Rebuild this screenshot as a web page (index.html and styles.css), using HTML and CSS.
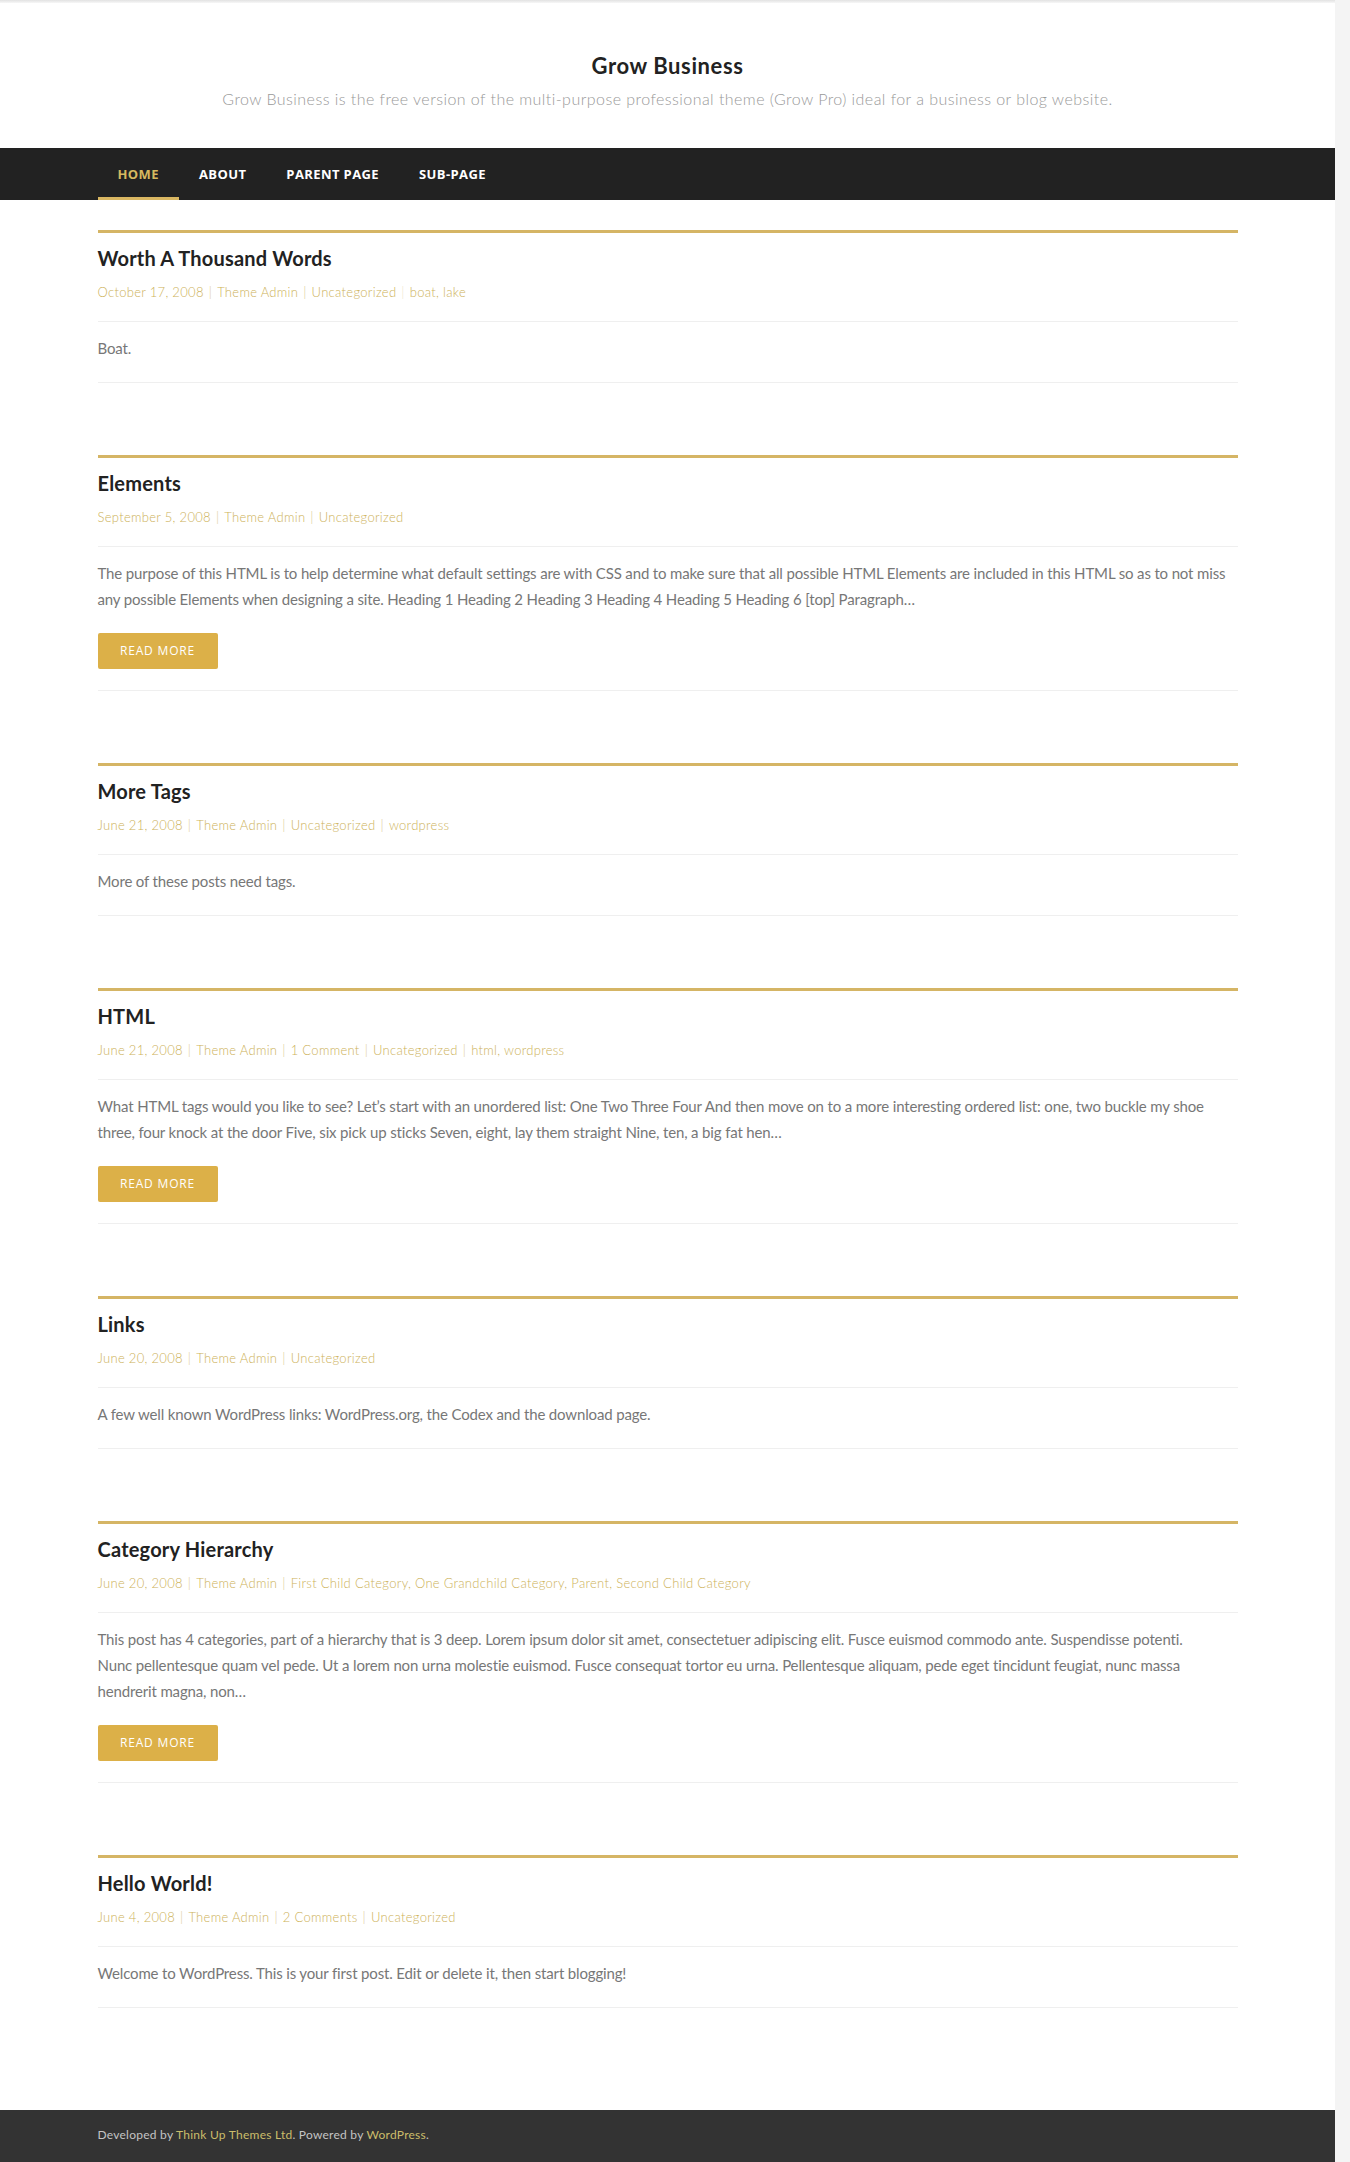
FILE: index.html
```html
<!DOCTYPE html>
<html lang="en">
<head>
<meta charset="utf-8">
<title>Grow Business</title>
<link rel="stylesheet" href="styles.css">
</head>
<body>
<div class="topshade"></div>
<header class="site-header">
  <h1 class="site-title">Grow Business</h1>
  <p class="tagline">Grow Business is the free version of the multi-purpose professional theme (Grow Pro) ideal for a business or blog website.</p>
</header>
<nav class="main-nav">
  <ul class="container nav-list">
    <li class="nav-item active"><a href="#">Home</a></li>
    <li class="nav-item"><a href="#">About</a></li>
    <li class="nav-item"><a href="#">Parent Page</a></li>
    <li class="nav-item"><a href="#">Sub-Page</a></li>
  </ul>
</nav>
<main class="container posts">
  <article class="post">
    <h2 class="post-title">Worth A Thousand Words</h2>
    <div class="post-meta"><a href="#">October 17, 2008</a><span class="sep">|</span><a href="#">Theme Admin</a><span class="sep">|</span><a href="#">Uncategorized</a><span class="sep faint">|</span><a href="#">boat</a>, <a href="#">lake</a></div>
    <div class="post-content"><p>Boat.</p></div>
  </article>

  <article class="post">
    <h2 class="post-title">Elements</h2>
    <div class="post-meta"><a href="#">September 5, 2008</a><span class="sep">|</span><a href="#">Theme Admin</a><span class="sep">|</span><a href="#">Uncategorized</a></div>
    <div class="post-content"><p>The purpose of this HTML is to help determine what default settings are with CSS and to make sure that all possible HTML Elements are included in this HTML so as to not miss any possible Elements when designing a site. Heading 1 Heading 2 Heading 3 Heading 4 Heading 5 Heading 6 [top] Paragraph…</p><a class="read-more" href="#">Read More</a></div>
  </article>

  <article class="post">
    <h2 class="post-title">More Tags</h2>
    <div class="post-meta"><a href="#">June 21, 2008</a><span class="sep">|</span><a href="#">Theme Admin</a><span class="sep">|</span><a href="#">Uncategorized</a><span class="sep">|</span><a href="#">wordpress</a></div>
    <div class="post-content"><p>More of these posts need tags.</p></div>
  </article>

  <article class="post">
    <h2 class="post-title">HTML</h2>
    <div class="post-meta"><a href="#">June 21, 2008</a><span class="sep">|</span><a href="#">Theme Admin</a><span class="sep">|</span><a href="#">1 Comment</a><span class="sep">|</span><a href="#">Uncategorized</a><span class="sep">|</span><a href="#">html</a>, <a href="#">wordpress</a></div>
    <div class="post-content"><p>What HTML tags would you like to see? Let’s start with an unordered list: One Two Three Four And then move on to a more interesting ordered list: one, two buckle my shoe three, four knock at the door Five, six pick up sticks Seven, eight, lay them straight Nine, ten, a big fat hen…</p><a class="read-more" href="#">Read More</a></div>
  </article>

  <article class="post">
    <h2 class="post-title">Links</h2>
    <div class="post-meta"><a href="#">June 20, 2008</a><span class="sep">|</span><a href="#">Theme Admin</a><span class="sep">|</span><a href="#">Uncategorized</a></div>
    <div class="post-content"><p>A few well known WordPress links: WordPress.org, the Codex and the download page.</p></div>
  </article>

  <article class="post">
    <h2 class="post-title">Category Hierarchy</h2>
    <div class="post-meta"><a href="#">June 20, 2008</a><span class="sep">|</span><a href="#">Theme Admin</a><span class="sep">|</span><a href="#">First Child Category</a>, <a href="#">One Grandchild Category</a>, <a href="#">Parent</a>, <a href="#">Second Child Category</a></div>
    <div class="post-content"><p>This post has 4 categories, part of a hierarchy that is 3 deep. Lorem ipsum dolor sit amet, consectetuer adipiscing elit. Fusce euismod commodo ante. Suspendisse potenti.<br>Nunc pellentesque quam vel pede. Ut a lorem non urna molestie euismod. Fusce consequat tortor eu urna. Pellentesque aliquam, pede eget tincidunt feugiat, nunc massa hendrerit magna, non…</p><a class="read-more" href="#">Read More</a></div>
  </article>

  <article class="post">
    <h2 class="post-title">Hello World!</h2>
    <div class="post-meta"><a href="#">June 4, 2008</a><span class="sep">|</span><a href="#">Theme Admin</a><span class="sep">|</span><a href="#">2 Comments</a><span class="sep">|</span><a href="#">Uncategorized</a></div>
    <div class="post-content"><p>Welcome to WordPress. This is your first post. Edit or delete it, then start blogging!</p></div>
  </article>
</main>
<footer class="site-footer">
  <div class="container footer-text">Developed by <a href="#">Think Up Themes Ltd</a>. Powered by <a href="#">WordPress</a>.</div>
</footer>
</body>
</html>
```

FILE: styles.css
```css
* { box-sizing: border-box; }
html {
  margin: 0;
  padding: 0;
  background: #f4f4f4;
}
body {
  margin: 0 15px 0 0;
  padding: 0;
  background: #fff;
  font-family: Lato, "Open Sans", "Liberation Sans", sans-serif;
  color: #666;
}
a { text-decoration: none; }

.container {
  width: 1140px;
  margin-left: auto;
  margin-right: auto;
}

.topshade {
  height: 3px;
  background: linear-gradient(#e2e2e2, #f7f7f7);
}

.site-header {
  text-align: center;
  padding: 50px 0 38px;
}
.site-title {
  margin: 0;
  font-size: 22px;
  line-height: 26px;
  font-weight: 700;
  letter-spacing: 0.6px;
  color: #222;
}
.tagline {
  margin: 9px 0 0;
  font-size: 16px;
  line-height: 22px;
  font-weight: 300;
  letter-spacing: 0.45px;
  color: #999;
}

.main-nav {
  background: #222;
  height: 52px;
}
.nav-list {
  list-style: none;
  padding: 0;
  margin-top: 0;
  margin-bottom: 0;
  display: flex;
  height: 52px;
}
.nav-item a {
  display: block;
  padding: 0 20px;
  line-height: 52px;
  font-family: "Open Sans", Lato, sans-serif;
  font-size: 13px;
  font-weight: 700;
  letter-spacing: 0.4px;
  text-transform: uppercase;
  color: #fff;
}
.nav-item.active a {
  color: #d6b95f;
  box-shadow: inset 0 -3px 0 #d9b762;
}

.posts {
  padding: 30px 0 30px;
}
.post {
  border-top: 3px solid #d5b565;
  margin-bottom: 72px;
}
.post-title {
  margin: 13px 0 0;
  font-size: 20px;
  line-height: 24px;
  font-weight: 700;
  letter-spacing: 0.2px;
  color: #222;
}
.post-meta {
  margin-top: 12px;
  padding-bottom: 19px;
  border-bottom: 1px solid #efefef;
  font-size: 13px;
  line-height: 20px;
  font-weight: 300;
  letter-spacing: 0.3px;
  color: #cdb25a;
}
.post-meta a { color: #cdb25a; }
.post-meta .sep {
  margin: 0 5px;
  color: #d9c88f;
}
.post-meta .sep.faint { color: #efe6c8; }

.post-content {
  padding: 13px 0 21px;
  border-bottom: 1px solid #efefef;
}
.post-content p {
  margin: 0;
  font-size: 15px;
  line-height: 26px;
  font-weight: 400;
  letter-spacing: -0.15px;
  color: #777;
}
.read-more {
  display: inline-block;
  margin-top: 21px;
  width: 120px;
  height: 36px;
  line-height: 36px;
  text-align: center;
  background: #dcb048;
  border-radius: 2px;
  color: #fff;
  font-family: "Open Sans", Lato, sans-serif;
  font-size: 12px;
  letter-spacing: 0.8px;
  text-transform: uppercase;
}

.site-footer {
  background: #333;
  padding: 16px 0 34px;
}
.footer-text {
  font-size: 12px;
  line-height: 18px;
  letter-spacing: 0.25px;
  color: #c4c4c4;
}
.footer-text a { color: #cbbd6a; }
```
